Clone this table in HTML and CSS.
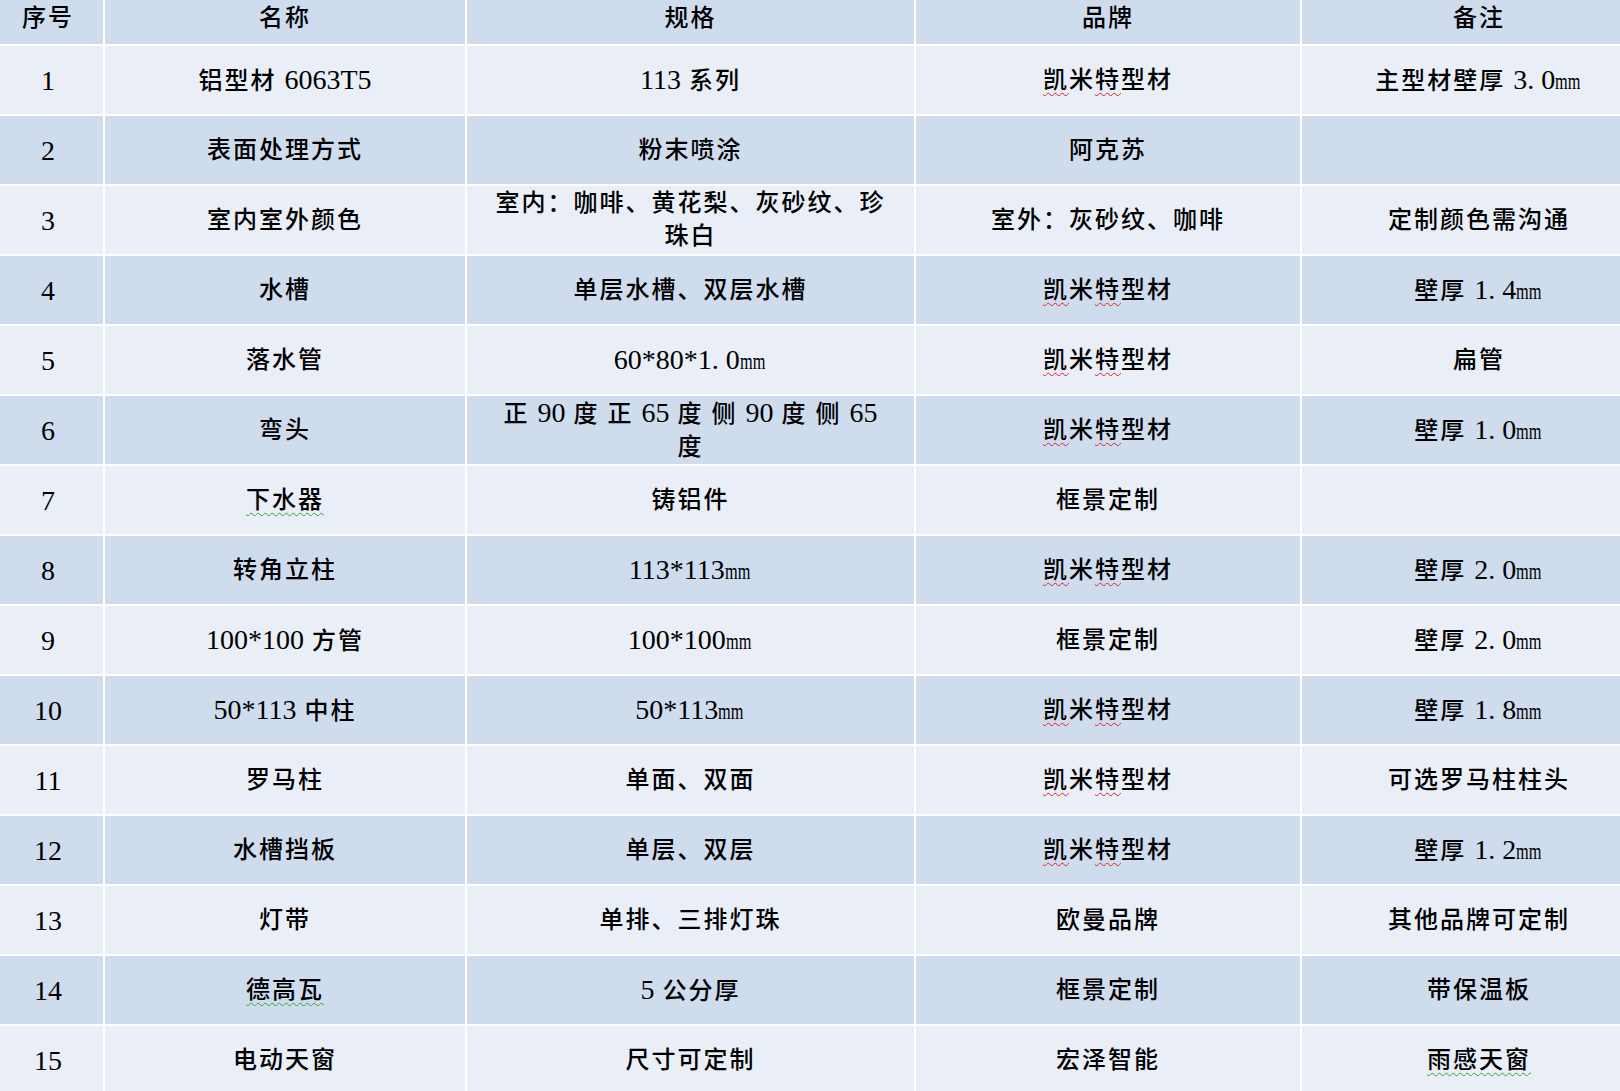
FILE: index.html
```html
<!DOCTYPE html>
<html lang="zh-CN">
<head>
<meta charset="utf-8">
<title>材料清单</title>
<link rel="stylesheet" href="styles.css">
</head>
<body>
<div class="sheet">
<table class="grid">
<colgroup>
<col class="c1"><col class="c2"><col class="c3"><col class="c4"><col class="c5">
</colgroup>
<thead>
<tr><th>序号</th><th>名称</th><th>规格</th><th>品牌</th><th>备注</th></tr>
</thead>
<tbody>
<tr><td>1</td><td>铝型材 <span class="n">6063T5</span></td><td><span class="n">113</span> 系列</td><td><span class="sp-r">凯</span>米<span class="sp-r">特</span>型材</td><td>主型材壁厚 <span class="n">3<span class="dot">.</span>0</span><span class="mm">mm</span></td></tr>
<tr><td>2</td><td>表面处理方式</td><td>粉末喷涂</td><td>阿克苏</td><td></td></tr>
<tr><td>3</td><td>室内室外颜色</td><td>室内：咖啡、黄花梨、灰砂纹、珍<br>珠白</td><td>室外：灰砂纹、咖啡</td><td>定制颜色需沟通</td></tr>
<tr><td>4</td><td>水槽</td><td>单层水槽、双层水槽</td><td><span class="sp-r">凯</span>米<span class="sp-r">特</span>型材</td><td>壁厚 <span class="n">1<span class="dot">.</span>4</span><span class="mm">mm</span></td></tr>
<tr><td>5</td><td>落水管</td><td><span class="n">60*80*1<span class="dot">.</span>0</span><span class="mm">mm</span></td><td><span class="sp-r">凯</span>米<span class="sp-r">特</span>型材</td><td>扁管</td></tr>
<tr><td>6</td><td>弯头</td><td>正 <span class="n">90</span> 度 正 <span class="n">65</span> 度 侧 <span class="n">90</span> 度 侧 <span class="n">65</span><br>度</td><td><span class="sp-r">凯</span>米<span class="sp-r">特</span>型材</td><td>壁厚 <span class="n">1<span class="dot">.</span>0</span><span class="mm">mm</span></td></tr>
<tr><td>7</td><td><span class="sp-g">下水器</span></td><td>铸铝件</td><td>框景定制</td><td></td></tr>
<tr><td>8</td><td>转角立柱</td><td><span class="n">113*113</span><span class="mm">mm</span></td><td><span class="sp-r">凯</span>米<span class="sp-r">特</span>型材</td><td>壁厚 <span class="n">2<span class="dot">.</span>0</span><span class="mm">mm</span></td></tr>
<tr><td>9</td><td><span class="n">100*100</span> 方管</td><td><span class="n">100*100</span><span class="mm">mm</span></td><td>框景定制</td><td>壁厚 <span class="n">2<span class="dot">.</span>0</span><span class="mm">mm</span></td></tr>
<tr><td>10</td><td><span class="n">50*113</span> 中柱</td><td><span class="n">50*113</span><span class="mm">mm</span></td><td><span class="sp-r">凯</span>米<span class="sp-r">特</span>型材</td><td>壁厚 <span class="n">1<span class="dot">.</span>8</span><span class="mm">mm</span></td></tr>
<tr><td>11</td><td>罗马柱</td><td>单面、双面</td><td><span class="sp-r">凯</span>米<span class="sp-r">特</span>型材</td><td>可选罗马柱柱头</td></tr>
<tr><td>12</td><td>水槽挡板</td><td>单层、双层</td><td><span class="sp-r">凯</span>米<span class="sp-r">特</span>型材</td><td>壁厚 <span class="n">1<span class="dot">.</span>2</span><span class="mm">mm</span></td></tr>
<tr><td>13</td><td>灯带</td><td>单排、三排灯珠</td><td>欧曼品牌</td><td>其他品牌可定制</td></tr>
<tr><td>14</td><td><span class="sp-g">德高瓦</span></td><td><span class="n">5</span> 公分厚</td><td>框景定制</td><td>带保温板</td></tr>
<tr><td>15</td><td>电动天窗</td><td>尺寸可定制</td><td>宏泽智能</td><td><span class="sp-g">雨感天窗</span></td></tr>
</tbody>
</table>
</div>
</body>
</html>
```

FILE: styles.css
```css
html, body {
  margin: 0;
  padding: 0;
  background: #ffffff;
}

.sheet {
  width: 1620px;
  height: 1091px;
  overflow: hidden;
  background: #ffffff;
}

.grid {
  margin: -10px 0 0 -9px;
  border-collapse: separate;
  border-spacing: 2px;
  background: #ffffff;
  table-layout: fixed;
  width: 1667px;
  font-family: "Liberation Serif", "Noto Sans CJK SC", serif;
  font-size: 24px;
  letter-spacing: 2px;
  color: #000000;
}

.c1 { width: 110px; }
.c2 { width: 360px; }
.c3 { width: 447px; }
.c4 { width: 384px; }
.c5 { width: 354px; }

.grid th,
.grid td {
  padding: 0 4px;
  text-align: center;
  vertical-align: middle;
  line-height: 33px;
  font-weight: 500;
  white-space: nowrap;
}

.grid th {
  height: 52px;
  background: #cfdcee;
}

.grid td {
  height: 68px;
}

.grid tbody td:first-child {
  font-size: 28px;
  letter-spacing: 0;
}

.grid tbody tr:nth-child(odd) td {
  background: #e9eef7;
}

.grid tbody tr:nth-child(even) td {
  background: #cfdcee;
}

.n {
  font-size: 28px;
  letter-spacing: 0;
}

.dot {
  letter-spacing: 7px;
}

.mm {
  display: inline-block;
  font-size: 24px;
  letter-spacing: 0;
  transform: scaleX(0.68);
  transform-origin: left center;
  margin-right: -10px;
}

.sp-r {
  text-decoration: underline wavy #e0202a;
  text-decoration-thickness: 1px;
  text-underline-offset: 4px;
}

.sp-g {
  text-decoration: underline wavy #2fa82f;
  text-decoration-thickness: 1px;
  text-underline-offset: 4px;
}
```
